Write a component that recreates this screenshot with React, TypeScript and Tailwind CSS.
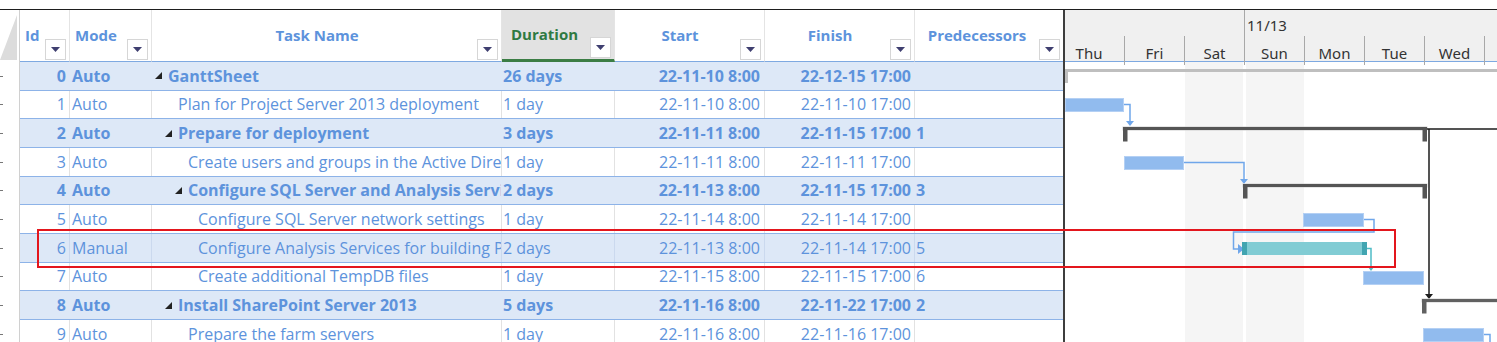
import React from "react";

type Row = {
  id: number;
  mode: string;
  name: string;
  level: number;
  summary?: boolean;
  selected?: boolean;
  dur: string;
  start: string;
  finish: string;
  pred: string;
};

const rows: Row[] = [
  { id: 0, mode: "Auto", name: "GanttSheet", level: 0, summary: true, dur: "26 days", start: "22-11-10 8:00", finish: "22-12-15 17:00", pred: "" },
  { id: 1, mode: "Auto", name: "Plan for Project Server 2013 deployment", level: 1, dur: "1 day", start: "22-11-10 8:00", finish: "22-11-10 17:00", pred: "" },
  { id: 2, mode: "Auto", name: "Prepare for deployment", level: 1, summary: true, dur: "3 days", start: "22-11-11 8:00", finish: "22-11-15 17:00", pred: "1" },
  { id: 3, mode: "Auto", name: "Create users and groups in the Active Directory domain", level: 2, dur: "1 day", start: "22-11-11 8:00", finish: "22-11-11 17:00", pred: "" },
  { id: 4, mode: "Auto", name: "Configure SQL Server and Analysis Services", level: 2, summary: true, dur: "2 days", start: "22-11-13 8:00", finish: "22-11-15 17:00", pred: "3" },
  { id: 5, mode: "Auto", name: "Configure SQL Server network settings", level: 3, dur: "1 day", start: "22-11-14 8:00", finish: "22-11-14 17:00", pred: "" },
  { id: 6, mode: "Manual", name: "Configure Analysis Services for building PerformancePoint", level: 3, selected: true, dur: "2 days", start: "22-11-13 8:00", finish: "22-11-14 17:00", pred: "5" },
  { id: 7, mode: "Auto", name: "Create additional TempDB files", level: 3, dur: "1 day", start: "22-11-15 8:00", finish: "22-11-15 17:00", pred: "6" },
  { id: 8, mode: "Auto", name: "Install SharePoint Server 2013", level: 1, summary: true, dur: "5 days", start: "22-11-16 8:00", finish: "22-11-22 17:00", pred: "2" },
  { id: 9, mode: "Auto", name: "Prepare the farm servers", level: 2, dur: "1 day", start: "22-11-16 8:00", finish: "22-11-16 17:00", pred: "" },
];

// indentation of the task name per outline level
const leafIndent: Record<number, string> = { 0: "pl-[16px]", 1: "pl-[26px]", 2: "pl-[36px]", 3: "pl-[46px]" };
const groupIndent: Record<number, string> = { 0: "pl-[3px]", 1: "pl-[13px]", 2: "pl-[23px]", 3: "pl-[33px]" };

const days = ["Thu", "Fri", "Sat", "Sun", "Mon", "Tue", "Wed", ""];

function FilterButton() {
  return (
    <div className="w-[21px] h-[21px] mr-[3px] mb-[1px] self-end shrink-0 border border-[#d6d6d6] bg-white flex items-center justify-center">
      <svg width="9" height="5" viewBox="0 0 9 5">
        <polygon points="0,0 9,0 4.5,5" fill="#3f3f70" />
      </svg>
    </div>
  );
}

function HeadCell({ label, width, center, active }: { label: string; width: string; center?: boolean; active?: boolean }) {
  return (
    <div
      className={`${width} h-full flex items-stretch border-r border-[#e4e4e4] ${
        active ? "bg-[#e2e2e2] border-b-[3px] border-b-[#3b7d45]" : "border-b border-b-[#7ea9e1]"
      }`}
    >
      <div
        className={`flex-1 flex items-center font-bold whitespace-nowrap ${center ? "justify-center" : ""} ${
          active ? "text-[#2f7a42] pl-[9px]" : "text-[#5d93dc] pl-[5px]"
        }`}
      >
        {label}
      </div>
      <FilterButton />
    </div>
  );
}

function Triangle() {
  return (
    <svg width="7" height="7" viewBox="0 0 7 7" className="shrink-0 mr-[6px]">
      <polygon points="7,0 7,7 0,7" fill="#222" />
    </svg>
  );
}

function GridRow({ r }: { r: Row }) {
  const tinted = r.summary || r.selected;
  const line = r.summary ? "border-[#dde8f7]" : r.selected ? "border-[#cbd9ee]" : "border-[#e2e2e2]";
  const cell = `h-full flex items-center overflow-hidden whitespace-nowrap border-r ${line}`;
  return (
    <div className="flex h-[28.67px] text-[16px]">
      <div className="w-[20px] h-full border-r border-[#d0d0d0] flex items-center">
        <div className="w-[3px] h-px bg-[#777]" />
      </div>
      <div
        className={`flex-1 flex h-full border-b border-[#8db3e8] ${tinted ? "bg-[#dde8f7]" : "bg-white"} ${
          r.summary ? "font-bold" : ""
        }`}
      >
        <div className={`${cell} w-[50px] justify-end pr-[3px]`}>{r.id}</div>
        <div className={`${cell} w-[82px] pl-[2px]`}>{r.mode}</div>
        <div className={`${cell} w-[350px] ${r.summary ? groupIndent[r.level] : leafIndent[r.level]}`}>
          {r.summary && <Triangle />}
          {r.name}
        </div>
        <div className={`${cell} w-[113px] pl-[1px]`}>{r.dur}</div>
        <div className={`${cell} w-[150px] justify-end pr-[4px]`}>{r.start}</div>
        <div className={`${cell} w-[150px] justify-end pr-[3px]`}>{r.finish}</div>
        <div className="h-full flex items-center w-[148px] pl-[1px]">{r.pred}</div>
      </div>
    </div>
  );
}

function Bar({ x, y, w }: { x: number; y: number; w: number }) {
  return <rect x={x + 0.5} y={y + 0.5} width={w - 1} height={13} fill="#91bbee" stroke="#b4d0f4" />;
}

function Summary({ x1, x2, y, color = "#555" }: { x1: number; x2: number; y: number; color?: string }) {
  return (
    <g>
      <rect x={x1 - 0.5} y={y - 0.5} width={x2 - x1 + 1} height={4} fill="#cfcfcf" />
      <rect x={x1} y={y} width={x2 - x1} height={3} fill={color} />
      <rect x={x1} y={y} width={4.5} height={14.5} fill={color} />
      {x2 < 430 && <rect x={x2 - 4.5} y={y} width={4.5} height={14.5} fill={color} />}
    </g>
  );
}

function GanttBody() {
  const blue = "#6fa6ea";
  return (
    <svg width="432" height="280" viewBox="0 0 432 280" className="block">
      <rect x="120" y="0" width="58" height="280" fill="#f5f5f5" />
      <rect x="181" y="0" width="58" height="280" fill="#f5f5f5" />

      {/* project summary */}
      <rect x="0" y="7" width="432" height="3" fill="#bfbfbf" />
      <rect x="0" y="7" width="3" height="14" fill="#bfbfbf" />

      {/* 1 */}
      <Bar x={0} y={36} w={59} />
      <path d="M59 42.5 H65 V60" stroke={blue} strokeWidth="1.5" fill="none" />
      <polygon points="61,59 69,59 65,64" fill={blue} />

      {/* 2 */}
      <Summary x1={58} x2={362} y={65} />
      <path d="M362 67 H432 M364 67 V233" stroke="#1c1c1c" strokeWidth="1.5" fill="none" />
      <polygon points="360,232 368,232 364,237" fill="#1c1c1c" />

      {/* 3 */}
      <Bar x={59} y={94} w={60} />
      <path d="M119 100.5 H179 V118" stroke={blue} strokeWidth="1.5" fill="none" />
      <polygon points="175,117 183,117 179,122" fill={blue} />

      {/* 4 */}
      <Summary x1={178} x2={362} y={122} />

      {/* 5 */}
      <Bar x={238} y={151} w={61} />
      <path d="M299 157.5 H309 V170 H168.5 V187 H174" stroke={blue} strokeWidth="1.5" fill="none" />
      <polygon points="173,182 179,187 173,192" fill={blue} />

      {/* 6 */}
      <rect x="177" y="180" width="125" height="13" fill="#81ccd4" />
      <rect x="177" y="180" width="5" height="13" fill="#42a5b1" />
      <rect x="297" y="180" width="5" height="13" fill="#42a5b1" />
      <path d="M302 186.5 H306 V207" stroke="#4fbcc6" strokeWidth="1.5" fill="none" />
      <polygon points="303,205 309,205 306,209" fill="#4fbcc6" />

      {/* 7 */}
      <Bar x={298} y={209} w={61} />

      {/* 8 */}
      <Summary x1={357} x2={432} y={237} color="#616161" />

      {/* 9 */}
      <Bar x={358} y={266} w={61} />
      <path d="M419 272.5 H425 V280" stroke={blue} strokeWidth="1.5" fill="none" />
    </svg>
  );
}

export default function App() {
  return (
    <div className="relative w-[1497px] h-[342px] overflow-hidden bg-white font-['Open_Sans',sans-serif] text-[15px] text-[#5d93dc]">
      <div className="h-[9px]" />
      <div className="h-px bg-[#1e1e1e]" />
      <div className="flex">
        {/* grid */}
        <div className="w-[1063px] shrink-0">
          <div className="flex h-[52px]">
            <div className="w-[20px] h-full border-r border-[#d0d0d0]">
              <svg width="20" height="52" viewBox="0 0 20 52" className="block">
                <polygon points="17,5 17,50 0,50" fill="#dcdcdc" />
              </svg>
            </div>
            <HeadCell label="Id" width="w-[50px]" />
            <HeadCell label="Mode" width="w-[82px]" />
            <HeadCell label="Task Name" width="w-[350px]" center />
            <HeadCell label="Duration" width="w-[113px]" active />
            <HeadCell label="Start" width="w-[150px]" center />
            <HeadCell label="Finish" width="w-[150px]" center />
            <div className="w-[148px] h-full flex items-stretch border-b border-b-[#7ea9e1]">
              <div className="flex-1 flex items-center justify-center font-bold">Predecessors</div>
              <FilterButton />
            </div>
          </div>
          {rows.map((r) => (
            <GridRow key={r.id} r={r} />
          ))}
        </div>

        <div className="w-[2px] shrink-0 bg-[#3e3e3e]" />

        {/* gantt */}
        <div className="flex-1 font-['Noto_Sans',sans-serif] text-[#333]">
          <div className="h-[52px] bg-[#f0f0f0] border-b border-[#7ea9e1] flex flex-col">
            <div className="h-[26px] flex">
              <div className="w-[179px] shrink-0" />
              <div className="flex-1 border-l border-[#a8a8a8] pl-[2px] pt-[4px] text-[15px] leading-[22px]">11/13</div>
            </div>
            <div className="flex-1 flex">
              {days.map((d, i) => (
                <div
                  key={i}
                  className={`w-[60px] shrink-0 border-r border-[#a8a8a8] flex items-center justify-center pt-[6px] text-[15px] ${
                    i === 0 ? "pr-[11px]" : ""
                  }`}
                >
                  {d}
                </div>
              ))}
            </div>
          </div>
          <GanttBody />
        </div>
      </div>

      {/* selection highlight */}
      <div className="absolute left-[37px] top-[229px] w-[1359px] h-[39px] border-2 border-[#e3161d]" />
    </div>
  );
}
